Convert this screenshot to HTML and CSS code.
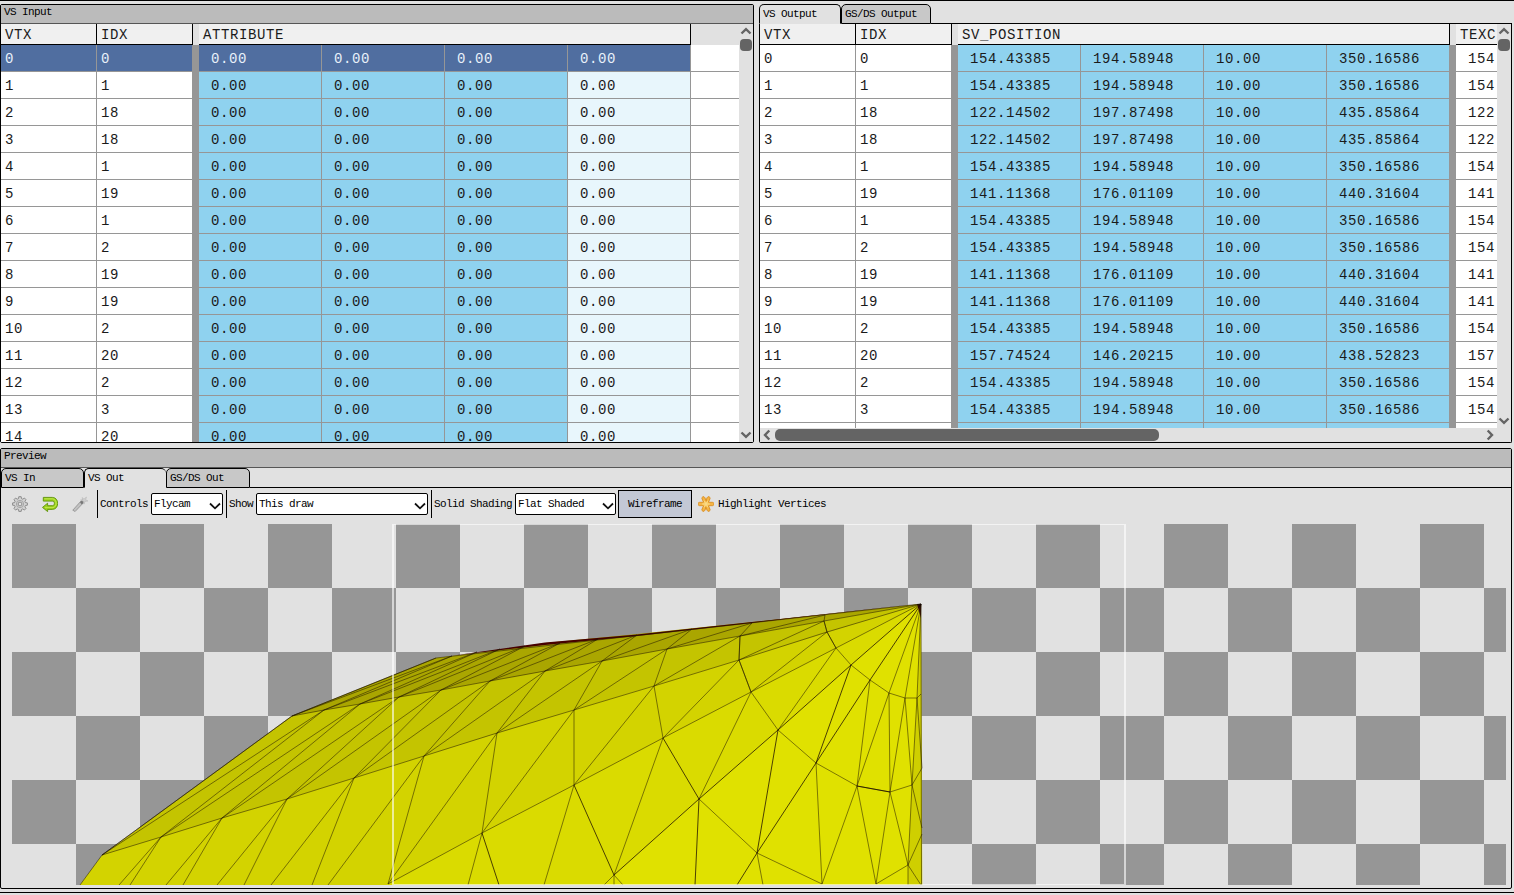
FILE: index.html
```
<!DOCTYPE html>
<html lang="en">
<head>
<meta charset="utf-8">
<title>Mesh Viewer</title>
<link rel="stylesheet" href="styles.css">
</head>
<body>
<main class="app">
  <div class="tables">
    <section class="panel input">
      <div class="title">VS Input</div>
      <div class="view">
        <div class="content">
          <div class="row head"><span class="h id">VTX</span><span class="h id">IDX</span><span class="hsep"></span><span class="h attr">ATTRIBUTE</span></div>
          <div class="rows" id="input-rows"></div>
        </div>
        <div class="vbar">
          <svg class="arrow" viewBox="0 0 12 8"><path d="M1.500 6.500 6 2.200 10.500 6.500"/></svg>
          <i class="thumb"></i>
          <svg class="arrow down" viewBox="0 0 12 8"><path d="M1.500 1.500 6 5.800 10.500 1.500"/></svg>
        </div>
      </div>
    </section>
    <section class="output">
      <div class="tabs"><span class="tab on t1">VS Output</span><span class="tab t2">GS/DS Output</span><span class="rest"></span></div>
      <div class="outbody">
        <div class="view">
          <div class="content">
            <div class="row head"><span class="h id">VTX</span><span class="h id">IDX</span><span class="hsep"></span><span class="h attr">SV_POSITION</span><span class="hsep"></span><span class="h tex">TEXC</span></div>
            <div class="rows" id="output-rows"></div>
          </div>
          <div class="vbar">
            <svg class="arrow" viewBox="0 0 12 8"><path d="M1.500 6.500 6 2.200 10.500 6.500"/></svg>
            <i class="thumb"></i>
            <svg class="arrow down" viewBox="0 0 12 8"><path d="M1.500 1.500 6 5.800 10.500 1.500"/></svg>
          </div>
        </div>
        <div class="hbar">
          <svg class="harrow" viewBox="0 0 8 12"><path d="M6.300 1.500 2 6 6.300 10.500"/></svg>
          <i class="hthumb"></i>
          <svg class="harrow right" viewBox="0 0 8 12"><path d="M1.700 1.500 6 6 1.700 10.500"/></svg>
        </div>
      </div>
    </section>
  </div>
  <section class="panel preview">
    <div class="title">Preview</div>
    <div class="tabs"><span class="tab p1">VS In</span><span class="tab on p2">VS Out</span><span class="tab p3">GS/DS Out</span><span class="rest"></span></div>
    <div class="toolbar">
      <svg class="icon" viewBox="0 0 16 16"><path d="M6.800.7h2.400l.3 1.900 1.300.6 1.600-1.200 1.600 1.700-1.100 1.600.5 1.300 2 .3v2.300l-2 .3-.5 1.300 1.100 1.600-1.600 1.700-1.600-1.200-1.300.6-.3 1.900H6.800l-.3-1.900-1.300-.6-1.600 1.200L2 12.400l1.100-1.600-.5-1.300-2-.3V6.900l2-.3.500-1.300L2 3.700 3.600 2l1.600 1.200 1.300-.6z" fill="#d2d2d2" stroke="#858585" stroke-width=".9"/><circle cx="8" cy="8" r="3.600" fill="none" stroke="#a4a4a4"/><circle cx="8" cy="8" r="1.900" fill="#e1e1e1" stroke="#858585" stroke-width=".9"/></svg>
      <svg class="icon i2" viewBox="0 0 16 16"><path d="M.5 11.400 5.600 7.200v2.500h4.700c2.800 0 2.800-4.600 0-4.600H1.300V1.400h9c7.200 0 7.200 12 0 12H5.600v2.200z" fill="#9bd01d" stroke="#5e9208" stroke-width=".9"/><path d="M2.300 2.800h8.300c4.400.4 4.800 8 .4 8.800H2.800" fill="none" stroke="#c5eb54" stroke-width=".9"/></svg>
      <svg class="icon i3" viewBox="0 0 16 16"><path d="m.8 14.200 8.400-9.400 2.200 2-8.300 8.700z" fill="#c2c2c2" stroke="#8e8e8e" stroke-width=".8"/><path d="m8 6.400 3-3.500 2 2-3.100 3.500z" fill="#777"/><path d="M10 1.500 12 3l2.500-2-.8 2.700L16 5l-3 .4-1 2.800-.8-3L8.500 4l2.200-.5z" fill="#cecece" stroke="#b4b4b4" stroke-width=".5"/></svg>
      <i class="rule r1"></i><span class="lbl l1">Controls</span>
      <span class="select s1">Flycam<svg viewBox="0 0 12 8"><path d="M1 1.500 6 6.300 11 1.500"/></svg></span>
      <i class="rule r2"></i><span class="lbl l2">Show</span>
      <span class="select s2">This draw<svg viewBox="0 0 12 8"><path d="M1 1.500 6 6.300 11 1.500"/></svg></span>
      <i class="rule r2"></i><span class="lbl l3">Solid Shading</span>
      <span class="select s3">Flat Shaded<svg viewBox="0 0 12 8"><path d="M1 1.500 6 6.300 11 1.500"/></svg></span>
      <span class="button">Wireframe</span>
      <svg class="icon star" viewBox="0 0 16 16"><g fill="#f5b544" stroke="#d98a1c" stroke-width=".8"><rect x="6.500" y=".2" width="3" height="15.600" rx="1.400" transform="rotate(24 8 8)"/><rect x="6.500" y=".2" width="3" height="15.600" rx="1.400" transform="rotate(-24 8 8)"/><rect x="6.300" y=".2" width="3.400" height="15.600" rx="1.400" transform="rotate(90 8 8)"/></g><circle cx="8" cy="8" r="2.800" fill="#f8c65c"/><path d="M6 4.500 8 8l2-3.500M6 11.500 8 8l2 3.500M4 8h8" fill="none" stroke="#fbdc8c" stroke-width=".9"/></svg>
      <span class="lbl l4">Highlight Vertices</span>
    </div>
    <svg class="canvas" viewBox="12 524 1494 361">
      <defs><pattern id="checker" x="12" y="524" width="128" height="128" patternUnits="userSpaceOnUse"><path fill="#969696" d="M0 0h64v64H0zM64 64h64v64H64z"/></pattern></defs>
      <path fill="#e1e1e1" d="M12 524h1494v361H12z"/>
      <path fill="url(#checker)" d="M12 524h1494v361H12z" shape-rendering="crispEdges"/>
      <path fill="#e0e100" d="M80 885 102 855.500 292 716 436 658 477 653 921 604 922 885z"/>
      <path fill="#dadb00" d="M388 885 482 833 574 785 663 738 751 692 836 648 921 604 851 665 778 730 699 799 604 885z"/>
      <path fill="#d3d300" d="M80 885 102 855.500 161 837 287 799 424 756 574 710 739 660 921 604 751 692 574 785 482 833 388 885z"/>
      <path fill="#c4c400" d="M102 855.500 292 716 441 690 602 661 740 636 921 604 739 660 574 710 424 756 287 799 161 837z"/>
      <path fill="#aaa600" d="M292 716 436 658 477 653 545 643 637 634 752 622 921 604 740 636 602 661 441 690z"/>
      <path fill="#460000" d="M450 656 545 642.500 637 634.500 752 622 921 603.500 752 623 637 636 545 645z"/>
      <path fill="#cfcf00" d="M921 604 917 698 912 785 908 865V885H922.300z"/>
      <path d="M917 604h4v14z" fill="#501000"/>
      <g id="wires" class="wires"></g>
      <g id="wires-strong" class="wires strong"></g>
      <path class="frame" d="M394 524.500H1124M394 884.500H1124"/>
      <path class="frame wide" d="M393 524v361M1125 524v361"/>
    </svg>
  </section>
</main>
<script src="app.js"></script>
</body>
</html>
```
FILE: styles.css
```
* { box-sizing: border-box; }
body { margin: 0; background: #e1e1e1; color: #000; font: 11px "Liberation Mono", monospace; letter-spacing: -.6px; }
.app { height: 893px; border-top: 1px solid #000; border-bottom: 1px solid #000; padding-top: 3px; overflow: hidden; }
.tables { display: flex; gap: 5px; height: 439px; }
.panel { border: 1px solid #000; border-radius: 2px; }
.input { width: 754px; }
.title { height: 19px; background: #bbb; border-bottom: 1px solid #555; padding-left: 3px; line-height: 14px; white-space: pre; }
.view { display: flex; height: 418px; background: #fff; overflow: hidden; }
.content { flex: 1; overflow: hidden; background: #fff; }
.row { display: flex; height: 27px; border-bottom: 1px solid #969696; color: #1a1a1a; font-size: 14px; letter-spacing: .6px; line-height: 28px; white-space: nowrap; }
.row.head { height: 21px; background: #e1e1e1; border: 0; line-height: 22px; }
.h { flex: none; background: #f0f0f0; border-right: 1px solid #000; border-bottom: 1px solid #000; padding-left: 4px; }
.id { width: 96px; }
.attr { width: 492px; }
.tex { width: 41px; border-right: 0; }
.hsep { flex: none; width: 6px; background: #e1e1e1; }
.cell { flex: none; width: 96px; border-right: 1px solid #969696; padding-left: 4px; }
.sep { flex: none; width: 6px; height: 27px; background: #969696; }
.cell.v { width: 123px; padding-left: 12px; background: #8fd2ef; }
.cell.pale { background: #e8f6fc; }
.cell.last { width: 41px; padding-left: 12px; border-right: 0; }
.selected .cell { background: #506ea0; color: #e8f0fa; }
.vbar { flex: none; width: 14px; background: #e1e1e1; display: flex; flex-direction: column; align-items: center; padding: 3px 0; }
.arrow { width: 12px; height: 8px; fill: none; stroke: #646464; stroke-width: 2.4; flex: none; }
.thumb { width: 12px; height: 12px; margin-top: 4px; border-radius: 4px; background: #646464; }
.down { margin-top: auto; }
.output { width: 753px; display: flex; flex-direction: column; }
.outbody { height: 419px; border: 1px solid #000; border-top: 0; border-radius: 0 0 2px 2px; }
.output .view { height: 404px; }
.hbar { height: 14px; background: #e1e1e1; display: flex; align-items: center; padding: 0 17px 0 3px; }
.harrow { width: 8px; height: 12px; fill: none; stroke: #646464; stroke-width: 2.4; }
.hthumb { width: 384px; height: 12px; margin-left: 4px; background: #646464; border-radius: 5px; }
.right { margin-left: auto; }
.tabs { display: flex; height: 20px; flex: none; }
.tab { border: 1px solid #000; border-radius: 5px 5px 0 0; background: #c8c8c8; padding-left: 3px; line-height: 18px; white-space: pre; }
.tab.on { background: #e1e1e1; border-bottom-color: #e1e1e1; }
.rest { flex: 1; border-bottom: 1px solid #000; }
.t1 { width: 82px; }
.t2 { width: 90px; }
.preview { width: 1512px; height: 441px; margin-top: 5px; }
.p1 { width: 83px; }
.p2 { width: 82px; border-right: 0; }
.p3 { width: 84px; }
.toolbar { display: flex; align-items: center; height: 36px; padding: 0 0 4px 11px; white-space: pre; }
.icon { flex: none; width: 16px; height: 16px; }
.i2, .i3 { margin-left: 14px; }
.rule { width: 1px; height: 28px; background: #000; margin-left: 3px; }
.rule.r1 { margin-left: 9px; }
.lbl { padding-left: 2px; }
.l1 { width: 53px; }
.l2 { width: 29px; }
.l3 { width: 83px; }
.l4 { padding-left: 4px; }
.select { height: 22px; border: 1px solid #000; border-radius: 2px; background: #fff; display: flex; align-items: center; justify-content: space-between; padding: 0 1px 0 2px; }
.select svg { width: 12px; height: 8px; fill: none; stroke: #111; stroke-width: 1.8; margin-top: 3px; }
.s1 { width: 72px; }
.s2 { width: 172px; }
.s3 { width: 101px; }
.button { width: 74px; height: 28px; margin-left: 2px; border: 1px solid #000; background: #c3c8d5; line-height: 26px; text-align: center; }
.star { margin-left: 6px; }
.canvas { display: block; width: 1494px; height: 361px; margin-left: 11px; }
.wires { fill: none; stroke: #1e1400; stroke-width: .8; stroke-opacity: .65; }
.strong { stroke: #100; stroke-width: .9; stroke-opacity: .8; }
.frame { stroke: #fff; stroke-opacity: .6; }
.wide { stroke-width: 2; }
```
FILE: app.js
```
const indices = [0, 1, 18, 18, 1, 19, 1, 2, 19, 19, 2, 20, 2, 3, 20];
const base = ['154.43385', '194.58948', '10.00', '350.16586'];
const positions = {
  18: ['122.14502', '197.87498', '10.00', '435.85864'],
  19: ['141.11368', '176.01109', '10.00', '440.31604'],
  20: ['157.74524', '146.20215', '10.00', '438.52823']
};
const cell = (text, cls = '') => `<span class="cell ${cls}">${text}</span>`;
const sep = '<span class="sep"></span>';

document.getElementById('input-rows').innerHTML = indices.map((idx, i) =>
  `<div class="row ${i ? '' : 'selected'}">${cell(i)}${cell(idx)}${sep}` +
  [0, 1, 2, 3].map(c => cell('0.00', c === 3 ? 'v pale' : 'v')).join('') + '</div>').join('');

// The horizontal scrollbar leaves only an empty sliver of the last output row.
document.getElementById('output-rows').innerHTML = indices.map((idx, i) => {
  const hidden = i === 14;
  const p = hidden ? ['', '', '', ''] : positions[idx] || base;
  return `<div class="row">${cell(hidden ? '' : i)}${cell(hidden ? '' : idx)}${sep}${p.map(v => cell(v, 'v')).join('')}${sep}${cell(p[0].slice(0, 3), 'last')}</div>`;
}).join('');

const apex = [921, 604];
const top_ = [[436,658],[452,656],[477,652],[500,649],[525,646],[560,643],[598,639],[637,635],[692,629],[752,623],[825,615]];
const a = [[292,716],[324,710],[360,704],[399,697],[441,690],[490,681],[545,671],[602,661],[667,649],[740,636],[824,621]];
const b = [[102,855],[161,837],[222,818],[287,799],[354,778],[424,756],[497,733],[574,710],[654,686],[739,660],[827,632]];
const c = [[388,884],[482,833],[574,785],[663,738],[751,692],[836,648]];
const lines = [
  [[80,885], b[0], a[0], top_[0], apex, [921.5,885]],
  [...a, apex], [...b, apex], [...c, apex],
  [a[10], b[10], c[5], [851,665],[870,680],[889,693],[905,698],[917,698],[921,694]],
  [a[9], b[9], c[4]],
  [c[4], [778,730],[816,763],[857,786],[890,792],[912,785],[922,768]],
  [[699,799],[757,853],[822,884]],
  [[604,885],[614,875],[623,885]], [[614,875],[614,885]],
  [b[1],[119,885]],[b[1],[130,885]],[b[2],[166,885]],[b[2],[183,885]],
  [b[3],[217,885]],[b[3],[244,885]],[b[4],[271,885]],[b[4],[312,885]],[b[5],[328,885]],
  [c[5],[778,730]],[c[4],[699,799]],[c[3],[614,875]],[c[2],[544,885]],[c[1],[468,885]],
  [[757,853],[763,885]],[[816,763],[822,884],[857,786],[876,884],[890,792],[908,865],[912,785],[922,828]],
  [[876,884],[908,865],[921,885]],[[922,834],[908,865],[908,885]],
  [[870,680],[857,786],[889,693],[890,792],[905,698],[912,785],[917,698],[922,768]],
  [apex,[889,693]],[apex,[905,698]],[apex,[917,698]]
];
for (let i = 0; i < 11; i++) {
  lines.push([a[i], b[i]], [a[i], top_[i]]);
  if (i < 10) lines.push([a[i], top_[i + 1]], [b[i], a[i + 1]]);
}
for (let i = 0; i < 6; i++) lines.push([c[i], b[i + 5]]);
for (let i = 0; i < 5; i++) lines.push([c[i], b[i + 6]]);

const strong = [
  [c[1],[499,885]], [c[2],[614,875]], [c[3],[699,799]],
  [[614,875],[699,799],[778,730],[851,665],apex],
  [[737,885],[757,853],[816,763],[870,680],apex],
  [[851,665],[816,763]], [[778,730],[757,853]], [[699,799],[695,885]], [[857,786],[890,792]]
];
const draw = set => set.map(l => `<polyline points="${l.map(p => p.join(',')).join(' ')}"/>`).join('');
document.getElementById('wires').innerHTML = draw(lines);
document.getElementById('wires-strong').innerHTML = draw(strong);
```
